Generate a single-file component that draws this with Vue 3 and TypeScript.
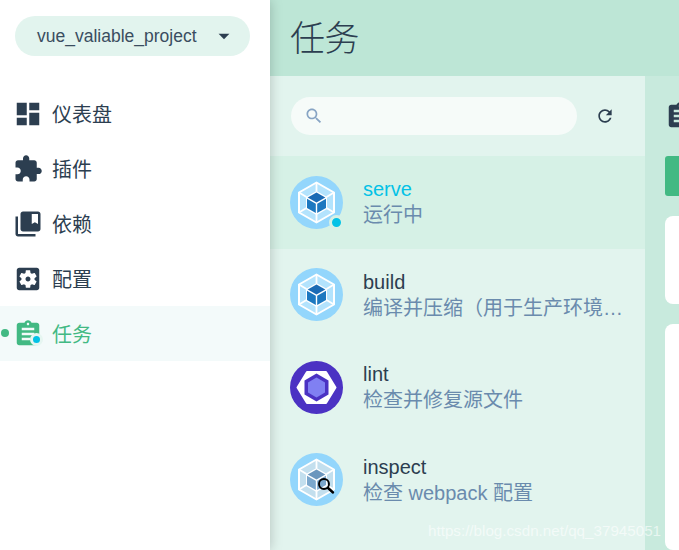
<script setup lang="ts">
interface NavItem { label: string; d: string; active?: boolean }
interface Task { name: string; desc: string; icon: 'webpack' | 'eslint' | 'inspect'; running?: boolean }

const nav: NavItem[] = [
  { label: '仪表盘', d: 'M3 13h8V3H3v10zm0 8h8v-6H3v6zm10 0h8V11h-8v10zm0-18v6h8V3h-8z' },
  { label: '插件', d: 'M20.5 11H19V7c0-1.1-.9-2-2-2h-4V3.5C13 2.12 11.88 1 10.5 1S8 2.12 8 3.5V5H4c-1.1 0-1.99.9-1.99 2v3.8H3.5c1.49 0 2.7 1.21 2.7 2.7s-1.21 2.7-2.7 2.7H2V20c0 1.1.9 2 2 2h3.8v-1.5c0-1.49 1.21-2.7 2.7-2.7 1.49 0 2.7 1.21 2.7 2.7V22H17c1.1 0 2-.9 2-2v-4h1.5c1.38 0 2.5-1.12 2.5-2.5S21.88 11 20.5 11z' },
  { label: '依赖', d: 'M4 6H2v14c0 1.1.9 2 2 2h14v-2H4V6zm16-4H8c-1.1 0-2 .9-2 2v12c0 1.1.9 2 2 2h12c1.1 0 2-.9 2-2V4c0-1.1-.9-2-2-2zm0 10l-2.5-1.5L15 12V4h5v8z' },
  { label: '配置', d: 'M12 10c-1.1 0-2 .9-2 2s.9 2 2 2 2-.9 2-2-.9-2-2-2zm7-7H5c-1.11 0-2 .9-2 2v14c0 1.1.89 2 2 2h14c1.11 0 2-.9 2-2V5c0-1.1-.89-2-2-2zm-1.75 9c0 .23-.02.46-.05.68l1.48 1.16c.13.11.17.3.08.45l-1.4 2.42c-.09.15-.27.21-.43.15l-1.74-.7c-.36.28-.76.51-1.18.69l-.26 1.85c-.03.17-.18.3-.35.3h-2.8c-.17 0-.32-.13-.35-.29l-.26-1.85c-.43-.18-.82-.41-1.18-.69l-1.74.7c-.16.06-.34 0-.43-.15l-1.4-2.42c-.09-.15-.05-.34.08-.45l1.48-1.16c-.03-.23-.05-.46-.05-.69 0-.23.02-.46.05-.68l-1.48-1.16c-.13-.11-.17-.3-.08-.45l1.4-2.42c.09-.15.27-.21.43-.15l1.74.7c.36-.28.76-.51 1.18-.69l.26-1.85c.03-.17.18-.3.35-.3h2.8c.17 0 .32.13.35.29l.26 1.85c.43.18.82.41 1.18.69l1.74-.7c.16-.06.34 0 .43.15l1.4 2.42c.09.15.05.34-.08.45l-1.48 1.16c.03.23.05.46.05.69z' },
  { label: '任务', active: true, d: 'M19 3h-4.18C14.4 1.84 13.3 1 12 1c-1.3 0-2.4.84-2.82 2H5c-1.1 0-2 .9-2 2v14c0 1.1.9 2 2 2h14c1.1 0 2-.9 2-2V5c0-1.1-.9-2-2-2zm-7 0c.55 0 1 .45 1 1s-.45 1-1 1-1-.45-1-1 .45-1 1-1zm2 14H7v-2h7v2zm3-4H7v-2h10v2zm0-4H7V7h10v2z' }
]

const assignment = nav[4].d

const tasks: Task[] = [
  { name: 'serve', desc: '运行中', icon: 'webpack', running: true },
  { name: 'build', desc: '编译并压缩（用于生产环境）的应用', icon: 'webpack' },
  { name: 'lint', desc: '检查并修复源文件', icon: 'eslint' },
  { name: 'inspect', desc: '检查 webpack 配置', icon: 'inspect' }
]
</script>

<template>
  <div class="app">
    <aside class="side">
      <div class="project">
        <span class="project-name">vue_valiable_project</span>
        <svg class="caret" viewBox="0 0 24 24" width="26" height="26"><path d="M7 10l5 5 5-5z" /></svg>
      </div>
      <nav class="nav">
        <div v-for="item in nav" :key="item.label" class="nav-row" :class="{ active: item.active }">
          <span v-if="item.active" class="nav-dot"></span>
          <span class="nav-icon">
            <svg viewBox="0 0 24 24" width="30" height="30"><path :d="item.d" /></svg>
            <span v-if="item.active" class="nav-badge"></span>
          </span>
          <span class="nav-label">{{ item.label }}</span>
        </div>
      </nav>
    </aside>

    <main class="main">
      <header class="top"><h1>任务</h1></header>
      <div class="body">
        <section class="list">
          <div class="toolbar">
            <div class="search">
              <svg viewBox="0 0 24 24" width="20" height="20"><path d="M15.5 14h-.79l-.28-.27C15.41 12.59 16 11.11 16 9.5 16 5.91 13.09 3 9.5 3S3 5.91 3 9.5 5.91 16 9.5 16c1.61 0 3.09-.59 4.23-1.57l.27.28v.79l5 4.99L20.49 19l-4.99-5zm-6 0C7.01 14 5 11.99 5 9.5S7.01 5 9.5 5 14 7.01 14 9.5 11.99 14 9.5 14z" /></svg>
            </div>
            <svg class="refresh" viewBox="0 0 24 24" width="20" height="20"><path d="M17.65 6.35C16.2 4.9 14.21 4 12 4c-4.42 0-7.99 3.58-7.99 8s3.57 8 7.99 8c3.73 0 6.84-2.55 7.73-6h-2.08c-.82 2.33-3.04 4-5.65 4-3.31 0-6-2.69-6-6s2.69-6 6-6c1.66 0 3.14.69 4.22 1.78L13 11h7V4l-2.35 2.35z" /></svg>
          </div>
          <div v-for="t in tasks" :key="t.name" class="task" :class="{ running: t.running }">
            <span class="avatar">
              <svg v-if="t.icon === 'eslint'" viewBox="0 0 53 53" width="53" height="53">
                <circle cx="26.5" cy="26.5" r="26.5" fill="#4b32c3" />
                <path d="M7.5 26.5 17 11h19l9.5 15.500L36 42H17z" fill="#fff" stroke="#fff" stroke-width="2" stroke-linejoin="round" />
                <path d="M26.500 12.500 38.500 19.500v14l-12 7-12-7v-14z" fill="#4b32c3" />
                <path d="M26.500 16.500 35 21.500v10l-8.500 5-8.500-5v-10z" fill="#8080f2" />
              </svg>
              <svg v-else viewBox="0 0 53 53" width="53" height="53" :class="{ faded: t.icon === 'inspect' }">
                <circle cx="26.5" cy="26.5" r="26.500" fill="#93d6fc" />
                <path class="hex" d="M26.500 6.500 44 16.500v20l-17.500 10L9 36.500v-20z" stroke="#fff" stroke-width="2" stroke-linejoin="round" />
                <path d="M26.500 6.500v9M44 16.500l-7.500 4.500M44 36.500l-7.500-4.500M26.500 46.500v-8.500M9 36.500l7.500-4.500M9 16.500l7.500 4.500" stroke="#fff" stroke-width="1.800" fill="none" />
                <path d="M26.500 15 37 21v12l-10.500 6L16 33V21z" fill="#fff" />
                <path class="cube-top" d="M26.500 16.500 35.300 21.500l-8.800 5-8.800-5z" />
                <path class="cube-side" d="M17 22.800 25.800 27.800V37L17 32zM36 22.800 27.200 27.800V37L36 32z" />
                <g v-if="t.icon === 'inspect'" fill="none" stroke="#000" stroke-linecap="round">
                  <circle cx="34" cy="31" r="5" stroke-width="1.900" />
                  <path d="M38 35 43 39.500" stroke-width="2.400" />
                </g>
              </svg>
              <span v-if="t.running" class="status"></span>
            </span>
            <div class="info">
              <div class="name">{{ t.name }}</div>
              <div class="desc">{{ t.desc }}</div>
            </div>
          </div>
        </section>
        <section class="detail">
          <svg class="detail-icon" viewBox="0 0 24 24" width="30" height="30"><path :d="assignment" /></svg>
          <div class="run-btn"></div>
          <div class="card card-a"></div>
          <div class="card card-b"></div>
        </section>
      </div>
    </main>
    <span class="watermark">https://blog.csdn.net/qq_37945051</span>
  </div>
</template>

<style>
html, body { margin: 0; overflow: hidden; }
</style>

<style scoped>
.app {
  position: relative;
  display: flex;
  width: 679px;
  height: 550px;
  overflow: hidden;
  background: #fff;
  color: #2c3e50;
  font-family: "Liberation Sans", "Noto Sans CJK SC", sans-serif;
}
.side {
  position: relative;
  z-index: 2;
  flex: 0 0 270px;
  background: #fff;
  box-shadow: 0 0 12px rgba(0, 0, 0, .22);
}
.project {
  display: flex;
  align-items: center;
  justify-content: space-between;
  box-sizing: border-box;
  width: 235px;
  height: 40px;
  margin: 16px 0 30px 15px;
  padding: 0 13px 0 22px;
  border-radius: 20px;
  background: #e2f4ee;
}
.project-name { font-size: 17.5px; color: #3a4d60; }
.caret { fill: #2c3e50; }
.nav-row {
  position: relative;
  display: flex;
  align-items: center;
  height: 55px;
  padding-left: 13px;
}
.nav-row.active { background: #f3fafa; color: #42b983; }
.nav-dot {
  position: absolute;
  left: 1px;
  top: 23px;
  width: 8px;
  height: 8px;
  border-radius: 50%;
  background: #42b983;
}
.nav-icon { position: relative; display: flex; width: 30px; height: 30px; margin-right: 10px; }
.nav-icon svg { fill: currentColor; }
.nav-badge {
  position: absolute;
  right: 0;
  bottom: 3px;
  width: 7px;
  height: 7px;
  border: 3px solid #e6f6f1;
  border-radius: 50%;
  background: #03c2e6;
}
.nav-label { font-size: 20px; margin-left: -1px; }
.main { flex: 1; display: flex; flex-direction: column; min-width: 0; }
.top {
  flex: 0 0 76px;
  display: flex;
  align-items: center;
  padding-left: 20px;
  background: #bde6d6;
}
.top h1 { margin: 0; font-size: 35px; font-weight: 300; line-height: 1; letter-spacing: -.5px; }
.body { flex: 1; display: flex; min-height: 0; }
.list { flex: 0 0 375px; background: #e2f4ee; }
.toolbar { display: flex; align-items: center; height: 80px; padding-left: 21px; }
.search {
  display: flex;
  align-items: center;
  box-sizing: border-box;
  width: 286px;
  height: 38px;
  padding-left: 13px;
  border-radius: 19px;
  background: #f6fbf9;
}
.search svg { fill: #87a4c4; }
.refresh { margin-left: 18px; fill: #2c3e50; }
.task {
  display: flex;
  align-items: center;
  height: 92.5px;
  padding-left: 20px;
}
.task.running { background: #d6f1e6; }
.avatar { position: relative; display: flex; flex: 0 0 53px; height: 53px; margin-right: 20px; }
.hex { fill: #b3e3fd; }
.cube-top { fill: #1b6bb5; }
.cube-side { fill: #1c78c0; }
.faded .hex { fill: #c3dfee; }
.faded .cube-top { fill: #6b96bd; }
.faded .cube-side { fill: #7ba7cc; }
.status {
  position: absolute;
  right: -1px;
  bottom: -1px;
  width: 9px;
  height: 9px;
  border: 3px solid #d6f1e6;
  border-radius: 50%;
  background: #03c2e6;
}
.info { width: 260px; font-size: 20px; line-height: 26px; }
.name { color: #2c3e50; }
.running .name { color: #03c2e6; }
.desc {
  color: #6a8bad;
  white-space: nowrap;
  overflow: hidden;
  text-overflow: ellipsis;
}
.detail {
  flex: 1;
  display: flex;
  flex-direction: column;
  padding: 25px 0 0 20px;
  background: #c8eadd;
  min-width: 0;
}
.detail-icon { flex: none; margin-bottom: 25px; fill: #2c3e50; }
.run-btn { flex: 0 0 40px; width: 60px; border-radius: 3px 0 0 3px; background: #42b983; }
.card { width: 60px; background: #fff; border-radius: 8px 0 0 8px; }
.card-a { flex: 0 0 88px; margin-top: 20px; }
.card-b { flex: 1; margin-top: 20px; }
.watermark {
  position: absolute;
  left: 428px;
  top: 522px;
  font-size: 15.200px;
  color: rgba(255, 255, 255, .6);
  white-space: nowrap;
}
</style>
